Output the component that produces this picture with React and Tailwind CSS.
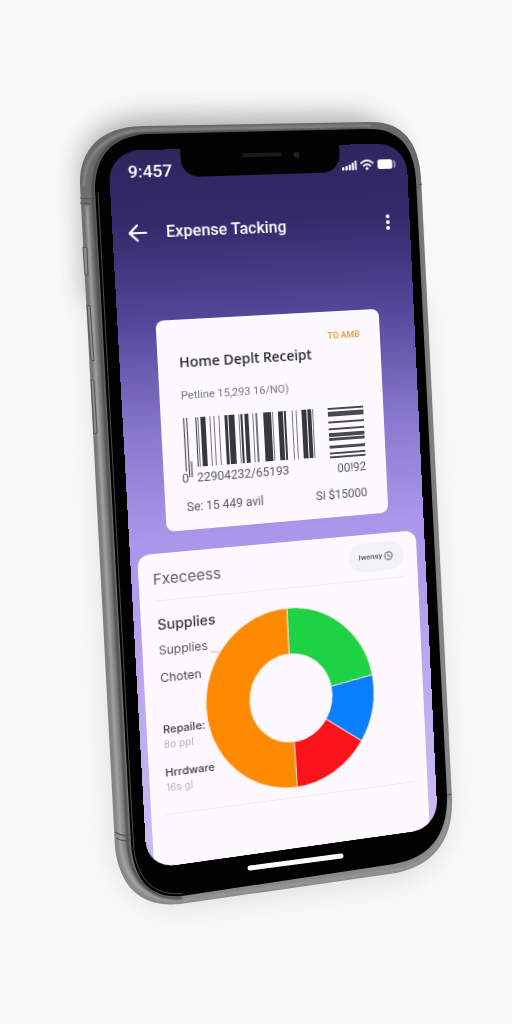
import React from "react";

const SLICES = [
  { name: "Chart", color: "#1fd243", from: 0, to: 81 },
  { name: "Repairs", color: "#0a7ffb", from: 81, to: 125 },
  { name: "Hardware", color: "#fb131c", from: 125, to: 179 },
  { name: "Supplies", color: "#ff8a00", from: 179, to: 360 },
];

function point(angle, radius) {
  const a = (angle * Math.PI) / 180;
  return `${(100 + radius * Math.sin(a)).toFixed(2)} ${(100 - radius * Math.cos(a)).toFixed(2)}`;
}

function slicePath({ from, to }) {
  const large = to - from > 180 ? 1 : 0;
  return `M${point(from, 100)} A100 100 0 ${large} 1 ${point(to, 100)} L${point(to, 49)} A49 49 0 ${large} 0 ${point(from, 49)} Z`;
}

function Donut() {
  return (
    <svg
      viewBox="0 0 200 200"
      preserveAspectRatio="none"
      className="h-[186px] w-[172px] overflow-visible"
      role="img"
      aria-label="Expenses by category"
    >
      {SLICES.map((s) => (
        <path key={s.name} d={slicePath(s)} fill={s.color} stroke="#fde8dc" strokeWidth="1" />
      ))}
    </svg>
  );
}

/* x, width, shade */
const BARS = [
  [13, 1, 0], [15, 1, 1], [18, 5, 0], [27, 1, 1], [31, 1, 1], [36, 1, 1], [42, 3, 0], [46, 6, 0],
  [56, 1, 1], [58, 2, 0], [62, 4, 0], [70, 1, 1], [73, 2, 1], [81, 3, 0], [84, 5, 0], [90, 1, 1],
  [96, 5, 0], [102, 2, 0], [110, 1, 1], [114, 1, 1], [120, 5, 0], [126, 4, 0], [131, 1, 1],
];

function Barcode() {
  return (
    <svg viewBox="0 0 134 62" className="h-[62px] w-[134px] overflow-visible" aria-hidden="true">
      <path d="M1.5 0V54M4.5 0V60M7 44V60" stroke="#555" strokeWidth="1.2" />
      {BARS.map(([x, w, s]) => (
        <rect key={x} x={x} y="0" width={w} height="50" fill={s ? "#777" : "#38383b"} />
      ))}
    </svg>
  );
}

const LINES = [
  [0, 2], [4, 2], [6, 3], [14, 2], [21, 2], [26, 4], [31, 3], [39, 3], [46, 2], [50, 2],
];

function SideCode() {
  return (
    <svg viewBox="0 0 37 52" className="h-[52px] w-[37px]" aria-hidden="true">
      {LINES.map(([y, h]) => (
        <rect key={y} x="0" y={y} width="37" height={h} fill="#4a4a4d" />
      ))}
    </svg>
  );
}

function StatusIcons() {
  return (
    <svg viewBox="0 0 58 16" className="h-4 w-[58px]" fill="#fff" role="img" aria-label="Signal, Wi-Fi, battery">
      <rect x="0" y="10" width="2.4" height="3.4" rx="1" />
      <rect x="3.4" y="9" width="2.4" height="4.4" rx="1" />
      <rect x="6.8" y="7.4" width="2.4" height="6" rx="1" />
      <rect x="10.2" y="5.4" width="2.2" height="8" rx="1" />
      <rect x="13.4" y="3.4" width="1.8" height="10" rx=".8" />
      <g fill="none" stroke="#fff" strokeWidth="1.9" strokeLinecap="round">
        <path d="M20 6.4Q26 1.2 32 6.4" />
        <path d="M22.6 9.2Q26 6.2 29.4 9.2" />
      </g>
      <circle cx="26" cy="12" r="1.6" />
      <rect x="37" y="3.2" width="15.5" height="9.8" rx="2.2" />
      <path d="M54 4.6Q56.4 8.2 54 11.8" fill="none" stroke="#c9c1ea" strokeWidth="1.2" />
    </svg>
  );
}

function PhoneBody() {
  return (
    <svg viewBox="76 120 360 784" className="absolute inset-0 h-full w-full overflow-visible" aria-hidden="true">
      <defs>
        <linearGradient id="metal" gradientUnits="userSpaceOnUse" x1="0" y1="122" x2="0" y2="904">
          <stop offset="0" stopColor="#696969" />
          <stop offset=".3" stopColor="#777" />
          <stop offset=".75" stopColor="#828282" />
          <stop offset="1" stopColor="#8a8a8a" />
        </linearGradient>
        <filter id="soft" x="-30%" y="-30%" width="160%" height="160%">
          <feGaussianBlur stdDeviation="12" />
        </filter>
        <filter id="fine">
          <feGaussianBlur stdDeviation="1" />
        </filter>
      </defs>
      <path
        d="M84 300L80 170C82 136 106 118 148 116L340 114C372 114 392 126 400 150L300 300Z"
        fill="#777"
        opacity=".55"
        filter="url(#soft)"
      />
      <path d="M88 300L112 850C122 890 142 908 184 908L400 880C434 870 448 846 450 806L424 300Z" fill="#aaa" opacity=".3" filter="url(#soft)" />
      <path
        d="M80 185C79 150 100 127 142 126L370 122C402 121 419 142 421 178L452 800C453 842 432 866 396 873L180 904C142 908 120 888 115 848Z"
        fill="url(#metal)"
      />
      <g fill="none" filter="url(#fine)">
        <path d="M84 186C84 155 106 131 146 130L370 126" stroke="#8f8f8f" strokeWidth="2" />
        <path d="M87 206L121 848C126 884 146 901 180 900" stroke="#a6a6a6" strokeWidth="3" />
        <path d="M180 901L396 870C430 864 450 840 449 800" stroke="#9c9c9c" strokeWidth="2" />
        <path d="M420 190L450 800" stroke="#8f8f8f" strokeWidth="1" />
        <path d="M93 190C93 156 110 134 148 133L368 128" stroke="#3c3c3c" strokeWidth="2" />
        <path d="M93 190L128 845C131 880 150 901 182 898" stroke="#484848" strokeWidth="3" />
      </g>
      <path
        d="M95 190C95 158 110 136 148 134L368 129C398 128 414 146 416 180L447 795C448 835 430 858 394 864L182 896C150 899 134 880 131 845Z"
        fill="#020202"
      />
      <path
        d="M98 192L133.500 845C136 877 152 896 182 893.500"
        fill="none"
        stroke="#6a6a6a"
        strokeWidth="1"
        opacity=".7"
      />
      <g stroke="#555" strokeWidth="1.2" fill="none">
        <path d="M80 198L94 199M80 203L94 204" />
        <path d="M115 832Q122 837 130 835M116 838Q123 842 131 840" />
        <path d="M418 185L422 184M447 795L452 794" />
      </g>
      <g fill="#8d8d8d" stroke="#555" strokeWidth="1">
        <path d="M83 247L87 248L88 275L85 275Z" />
        <path d="M87 305L90 306L94 361L91 360Z" />
        <path d="M91 379L94 381L97 433L94 434Z" />
      </g>
      <path d="M250 868L341 856" stroke="#fff" strokeWidth="5" strokeLinecap="round" />
    </svg>
  );
}

function StatusBar() {
  return (
    <div className="flex h-[42px] items-center justify-between pr-[10px] pl-[18px]">
      <time className="w-[50px] text-[17px] leading-5 font-medium">9:457</time>
      <div className="flex h-7 w-[160px] items-start justify-center gap-3 self-start rounded-b-[18px] bg-[#030304] pt-[6px] pl-5">
        <span className="h-1 w-10 rounded-full bg-[#1b1a1f]" />
        <span className="h-[6px] w-[6px] rounded-full bg-[#20202a]" />
      </div>
      <StatusIcons />
    </div>
  );
}

function Header() {
  return (
    <header className="flex h-20 items-center pr-[18px] pl-[14px]">
      <button type="button" aria-label="Back" className="flex w-[38px] justify-start">
        <svg viewBox="0 0 20 20" className="h-5 w-5" fill="none" stroke="#fff" strokeWidth="2.2" strokeLinecap="round" strokeLinejoin="round">
          <path d="M18.500 10H2.500M10 2.500L2.500 10L10 17.500" />
        </svg>
      </button>
      <h1 className="flex-1 text-[16px] leading-5 font-medium">Expense Tacking</h1>
      <button type="button" aria-label="More options">
        <svg viewBox="0 0 10 20" className="h-5 w-[10px]" fill="#fff">
          <circle cx="5" cy="3" r="2" />
          <circle cx="5" cy="9" r="2" />
          <circle cx="5" cy="15" r="2" />
        </svg>
      </button>
    </header>
  );
}

function Receipt() {
  return (
    <section className="mx-[37px] mt-12 flex h-[212px] flex-col rounded-lg bg-[#fdfaff] px-[21px] pt-[19px] text-[#55555a]">
      <p className="text-right text-[9px] leading-3 font-bold text-[#eda04f]">TO AMB</p>
      <h2 className="mt-[2px] font-['Noto_Sans',sans-serif] text-[14px] leading-5 font-medium text-[#1c1c20]">Home Deplt Receipt</h2>
      <p className="mt-4 text-[11px] leading-4 text-[#77777c]">Petline 15,293 16/NO)</p>
      <div className="mt-[14px] flex justify-between">
        <div>
          <Barcode />
          <p className="-mt-2 -ml-[3px] flex gap-2 text-[12px] leading-[14px]">
            <span>0</span>
            <span>22904232/65193</span>
          </p>
        </div>
        <div>
          <SideCode />
          <p className="mt-1 text-right text-[12px] leading-[14px]">00!92</p>
        </div>
      </div>
      <div className="mt-3 flex justify-between text-[12px] leading-4">
        <span>Se: 15 449 avil</span>
        <span>Si $15000</span>
      </div>
    </section>
  );
}

function Expenses() {
  return (
    <section className="mt-[21px] mr-[9px] ml-[7px] flex-1 rounded-t-[12px] bg-[#fdf9ff] px-[14px] font-[Inter,sans-serif] text-[#38383c]">
      <div className="flex h-12 items-center justify-between border-b border-[#efeaf3] pt-1">
        <h2 className="text-[15px] leading-5 text-[#5b5b60]">Fxeceess</h2>
        <button type="button" className="-mt-1 flex h-[30px] w-[58px] items-center justify-center gap-[2px] rounded-full bg-[#f3f2f8] font-[Roboto,sans-serif] text-[8px] leading-3 font-medium text-[#55555a]">
          Iwensy
          <svg viewBox="0 0 12 12" className="h-[10px] w-[10px]" fill="none" stroke="#55555a" strokeWidth="1.1">
            <circle cx="6" cy="6" r="4.8" />
            <path d="M5 3.5L6 6.5L9 7.5" />
          </svg>
        </button>
      </div>
      <div className="relative flex h-[217px] border-b border-[#efeaf3]">
        <dl className="w-[46px] shrink-0 pl-[2px] text-[12px] leading-4 whitespace-nowrap">
          <dt className="mt-[14px] text-[14px] leading-5 font-medium">Supplies</dt>
          <dd className="mt-2 text-[#55555a]">Supplies</dd>
          <dd className="mt-3 text-[#48484c]">Choten</dd>
          <dt className="mt-9 text-[11px] font-medium">Repaile:</dt>
          <dd className="text-[10px] leading-[14px] text-[#b3b1b8]">8o ppl</dd>
          <dt className="mt-[14px] text-[11px] font-medium">Hrrdware</dt>
          <dd className="text-[10px] leading-[14px] text-[#b3b1b8]">16s gl</dd>
        </dl>
        <div className="pt-5">
          <Donut />
        </div>
        <svg viewBox="0 0 10 4" className="absolute top-[55px] left-[53px] h-1 w-[10px]" aria-hidden="true">
          <path d="M0 1L10 3.4" stroke="#f3c9a4" strokeWidth="1.4" />
        </svg>
      </div>
    </section>
  );
}

export default function App() {
  return (
    <main className="flex min-h-screen items-center justify-center overflow-hidden bg-[#f8f8f8]">
      <div className="relative h-[784px] w-[360px] shrink-0 pt-[31px] pl-8">
        <PhoneBody />
        <div className="flex h-[720px] w-[300px] origin-top-left [transform:matrix3d(1.0423,-0.02798,0,0.0001643,0.05518,1.0158,0,0.00002588,0,0,1,0,0,0,0,1)] flex-col overflow-hidden rounded-t-[30px] rounded-b-[28px] bg-[linear-gradient(to_bottom,#30265f_0%,#34296a_10%,#55479a_24%,#8a7bd0_40%,#a897ea_54%,#b8a8f0_75%,#cdbdf5_100%)] font-[Roboto,sans-serif] text-white">
          <StatusBar />
          <Header />
          <Receipt />
          <Expenses />
        </div>
      </div>
    </main>
  );
}
